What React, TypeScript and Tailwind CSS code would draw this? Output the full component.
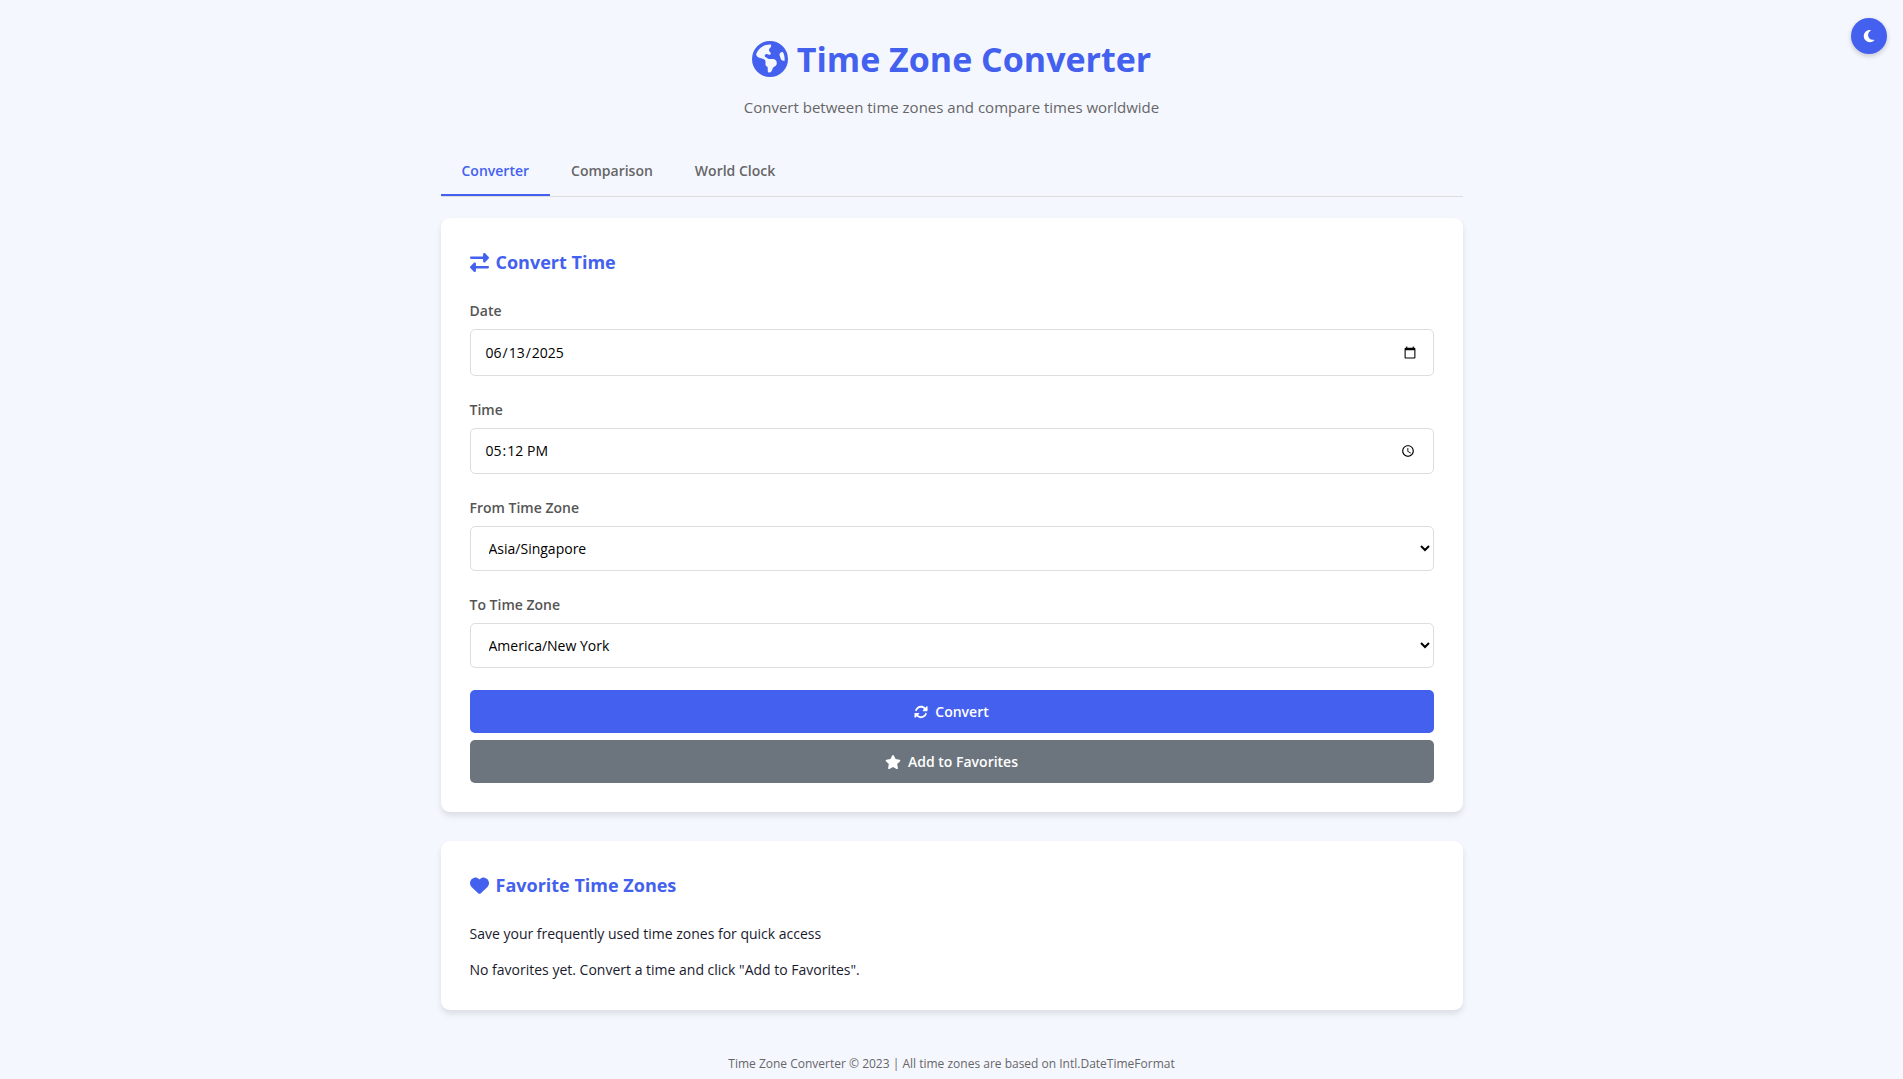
import { useState } from "react";
import type { ReactNode } from "react";
import {
  FaEarthAmericas,
  FaHeart,
  FaMoon,
  FaRightLeft,
  FaRotate,
  FaStar,
} from "react-icons/fa6";

const TABS = ["Converter", "Comparison", "World Clock"];

const ZONES = [
  "America/New York",
  "America/Los Angeles",
  "Asia/Singapore",
  "Asia/Tokyo",
  "Europe/London",
  "Europe/Paris",
];

const fieldClass =
  "w-full rounded-[5px] border border-[#dddddd] bg-white px-3.5 text-sm text-black";

function Card({ children }: { children: ReactNode }) {
  return (
    <section className="mb-[29px] rounded-[9px] bg-white p-[29px] shadow-[0_4px_6px_rgba(0,0,0,0.1)]">
      {children}
    </section>
  );
}

function CardTitle({ icon, children }: { icon: ReactNode; children: ReactNode }) {
  return (
    <h2 className="mb-[22px] flex h-[30px] items-center gap-[7px] text-lg font-bold text-[#4361ee]">
      {icon}
      {children}
    </h2>
  );
}

function Field({ id, label, children }: { id: string; label: string; children: ReactNode }) {
  return (
    <div className="mb-[22px]">
      <label htmlFor={id} className="mb-[7px] block text-sm leading-[23px] font-semibold text-[#555555]">
        {label}
      </label>
      {children}
    </div>
  );
}

function ZoneSelect({ id, value }: { id: string; value: string }) {
  return (
    <select id={id} defaultValue={value} className={`${fieldClass} block h-[45px]`}>
      {ZONES.map((zone) => (
        <option key={zone}>{zone}</option>
      ))}
    </select>
  );
}

export default function App() {
  const [tab, setTab] = useState("Converter");

  return (
    <div className="min-h-dvh bg-[#f5f7ff] font-['Open_Sans','Noto_Sans',sans-serif] text-sm text-[#1a1a2e]">
      <button
        type="button"
        aria-label="Toggle dark mode"
        className="fixed top-[18px] right-4 flex size-9 items-center justify-center rounded-full bg-[#4361ee] text-white shadow-[0_2px_5px_rgba(0,0,0,0.2)]"
      >
        <FaMoon className="size-3.5" />
      </button>

      <div className="mx-auto max-w-[1080px] px-[29px] pt-[30px]">
        <header className="mb-7 text-center">
          <h1 className="mb-[7px] flex items-center justify-center gap-[9px] text-[34px] leading-[58px] font-bold text-[#4361ee]">
            <FaEarthAmericas className="size-9" />
            Time Zone Converter
          </h1>
          <p className="text-[15px] leading-6 text-[#666666]">
            Convert between time zones and compare times worldwide
          </p>
        </header>

        <nav className="mb-[21px] flex border-b border-[#dddddd]">
          {TABS.map((name) => (
            <button
              key={name}
              type="button"
              onClick={() => setTab(name)}
              className={`border-b-2 px-[21px] py-3.5 text-sm leading-[19px] font-semibold ${
                tab === name ? "border-[#4361ee] text-[#4361ee]" : "border-transparent text-[#666666]"
              }`}
            >
              {name}
            </button>
          ))}
        </nav>

        <main>
          <Card>
            <CardTitle icon={<FaRightLeft className="size-[19px]" />}>Convert Time</CardTitle>
            <Field id="date" label="Date">
              <input id="date" type="date" defaultValue="2025-06-13" className={`${fieldClass} block h-[47px]`} />
            </Field>
            <Field id="time" label="Time">
              <input id="time" type="time" defaultValue="17:12" className={`${fieldClass} block h-[46px]`} />
            </Field>
            <Field id="from-zone" label="From Time Zone">
              <ZoneSelect id="from-zone" value="Asia/Singapore" />
            </Field>
            <Field id="to-zone" label="To Time Zone">
              <ZoneSelect id="to-zone" value="America/New York" />
            </Field>
            <div className="flex flex-col gap-[7px]">
              <button
                type="button"
                className="flex h-[43px] items-center justify-center gap-[7px] rounded-[5px] bg-[#4361ee] font-semibold text-white"
              >
                <FaRotate />
                Convert
              </button>
              <button
                type="button"
                className="flex h-[43px] items-center justify-center gap-[7px] rounded-[5px] bg-[#6c757d] font-semibold text-white"
              >
                <FaStar className="size-4" />
                Add to Favorites
              </button>
            </div>
          </Card>

          <Card>
            <CardTitle icon={<FaHeart className="size-[19px]" />}>Favorite Time Zones</CardTitle>
            <p className="mb-[13px] leading-[23px]">Save your frequently used time zones for quick access</p>
            <p className="leading-[23px]">No favorites yet. Convert a time and click "Add to Favorites".</p>
          </Card>
        </main>

        <footer className="pt-3.5 text-center text-xs leading-[21px] text-[#666666]">
          Time Zone Converter © 2023 | All time zones are based on Intl.DateTimeFormat
        </footer>
      </div>
    </div>
  );
}
